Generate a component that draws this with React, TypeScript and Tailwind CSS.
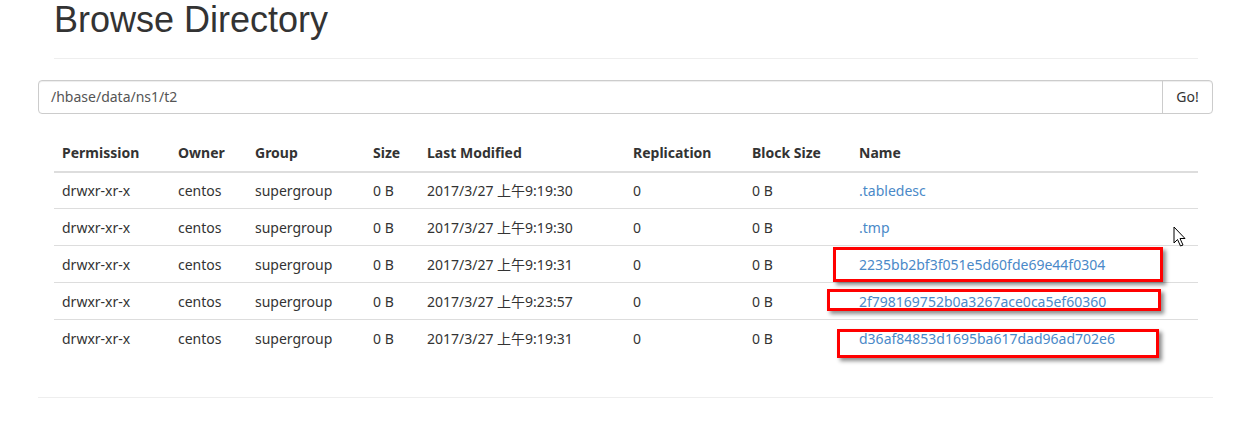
const rows = [
  { time: "2017/3/27 上午9:19:30", name: ".tabledesc" },
  { time: "2017/3/27 上午9:19:30", name: ".tmp" },
  { time: "2017/3/27 上午9:19:31", name: "2235bb2bf3f051e5d60fde69e44f0304" },
  { time: "2017/3/27 上午9:23:57", name: "2f798169752b0a3267ace0ca5ef60360" },
  { time: "2017/3/27 上午9:19:31", name: "d36af84853d1695ba617dad96ad702e6" },
];

const cols = ["w-[116px]", "w-[77px]", "w-[118px]", "w-[54px]", "w-[206px]", "w-[119px]", "w-[107px]", ""];
const heads = ["Permission", "Owner", "Group", "Size", "Last Modified", "Replication", "Block Size", "Name"];

export default function App() {
  return (
    <div
      className="relative h-[422px] w-[1248px] overflow-hidden bg-white text-[14px] text-[#333]"
      style={{ fontFamily: '"Noto Sans", "Noto Sans CJK SC", sans-serif' }}
    >
      <div className="ml-[54px] mr-[50px] border-b border-[#eee] pb-[18px]">
        <h1
          className="text-[36px] leading-[1.1] text-[#333]"
          style={{ fontFamily: '"Liberation Sans", Arial, sans-serif' }}
        >
          Browse Directory
        </h1>
      </div>

      <div className="ml-[38px] mr-[35px] mt-[21px] flex h-[34px] rounded border border-[#ccc] shadow-[inset_0_1px_1px_rgba(0,0,0,0.075)]">
        <div className="flex flex-1 items-center px-[12px] text-[#555]">/hbase/data/ns1/t2</div>
        <div className="flex w-[50px] items-center justify-center border-l border-[#ccc] text-[#333]">Go!</div>
      </div>

      <div className="ml-[54px] mr-[50px] mt-[21px]">
        <table className="w-full border-collapse">
          <thead>
            <tr className="h-[37px] border-b-2 border-[#ddd]">
              {heads.map((h, i) => (
                <th key={h} className={`${cols[i]} px-[8px] text-left font-bold`}>
                  {h}
                </th>
              ))}
            </tr>
          </thead>
          <tbody>
            {rows.map((r, i) => (
              <tr key={i} className="h-[37px] border-b border-[#ddd] last:border-b-0">
                <td className="px-[8px]">drwxr-xr-x</td>
                <td className="px-[8px]">centos</td>
                <td className="px-[8px]">supergroup</td>
                <td className="px-[8px]">0 B</td>
                <td className="px-[8px]">{r.time}</td>
                <td className="px-[8px]">0</td>
                <td className="px-[8px]">0 B</td>
                <td className="px-[8px] text-[#4a89c8]">{r.name}</td>
              </tr>
            ))}
          </tbody>
        </table>
      </div>

      <div className="ml-[38px] mr-[35px] mt-[40px] border-t border-[#eee]" />

      {/* annotation boxes */}
      <div className="absolute left-[833px] top-[247px] h-[35px] w-[330px] border-[3px] border-[#f00] shadow-[3px_3px_4px_rgba(0,0,0,0.45)]" />
      <div className="absolute left-[827px] top-[289px] h-[22px] w-[334px] border-[3px] border-[#f00] shadow-[3px_3px_4px_rgba(0,0,0,0.45)]" />
      <div className="absolute left-[837px] top-[329px] h-[29px] w-[322px] border-[3px] border-[#f00] shadow-[3px_3px_4px_rgba(0,0,0,0.45)]" />

      {/* cursor */}
      <svg className="absolute left-[1173px] top-[226px]" width="14" height="22" viewBox="0 0 14 22">
        <path d="M1 1 L1 17 L4.5 13.5 L7.5 20 L10 19 L7 12.5 L12 12.5 Z" fill="#fff" stroke="#000" strokeWidth="1" strokeLinejoin="round" />
      </svg>
    </div>
  );
}
